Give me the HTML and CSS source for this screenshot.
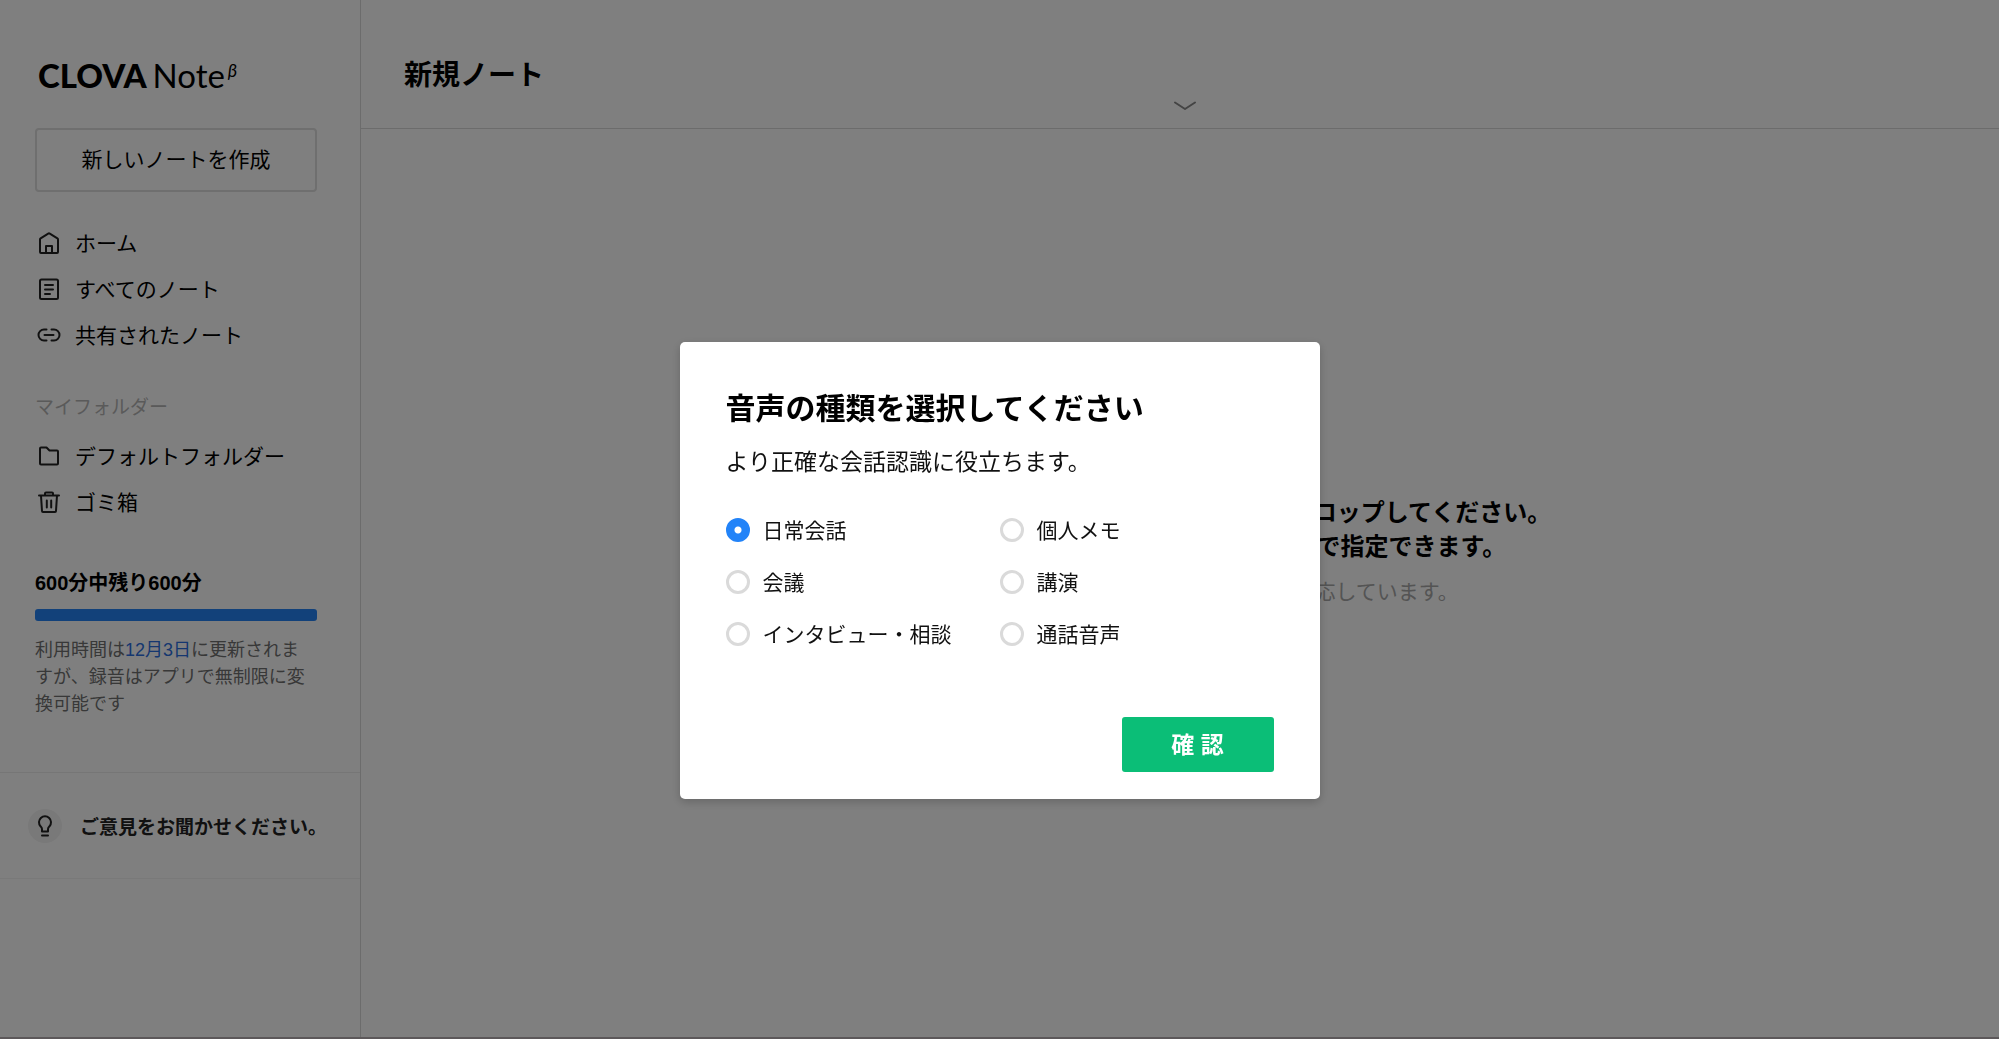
FILE: index.html
```html
<!DOCTYPE html>
<html lang="ja">
<head>
<meta charset="utf-8">
<meta name="viewport" content="width=device-width, initial-scale=1">
<title>CLOVA Note</title>
<link rel="stylesheet" href="styles.css">
</head>
<body>
<div class="app">
  <aside class="sidebar">
    <a class="logo" href="#"><span class="logo-brand">CLOVA</span><span class="logo-name">Note</span><sup class="logo-beta">β</sup></a>
    <button class="create" type="button">新しいノートを作成</button>
    <nav>
      <ul class="menu">
        <li><a class="menu-link" href="#"><svg class="icon" viewBox="0 0 24 24"><path d="M3 8.500 Q3 7.800 3.600 7.400 L11.200 2.600 Q12 2.100 12.800 2.600 L20.400 7.400 Q21 7.800 21 8.500 V21 Q21 22 20 22 H4 Q3 22 3 21 Z"/><path d="M9 22 V15 H15 V22"/></svg><span class="menu-label">ホーム</span></a></li>
        <li><a class="menu-link" href="#"><svg class="icon" viewBox="0 0 24 24"><rect x="3" y="2.5" width="18" height="19.5" rx="1.5"/><path d="M8 8 H16 M8 12.500 H16 M8 17 H13"/></svg><span class="menu-label">すべてのノート</span></a></li>
        <li><a class="menu-link" href="#"><svg class="icon" viewBox="0 0 24 24"><path d="M9.500 6.500 H7 A5.500 5.500 0 0 0 7 17.500 H9.500 M14.500 6.500 H17 A5.500 5.500 0 0 1 17 17.500 H14.500 M7.500 12 H16.500"/></svg><span class="menu-label">共有されたノート</span></a></li>
      </ul>
      <h2 class="menu-title">マイフォルダー</h2>
      <ul class="menu">
        <li><a class="menu-link" href="#"><svg class="icon" viewBox="0 0 24 24"><path d="M3 4.500 Q3 3.500 4 3.500 H9.500 L12.500 6.500 H20 Q21 6.500 21 7.500 V19.500 Q21 20.500 20 20.500 H4 Q3 20.500 3 19.500 Z"/></svg><span class="menu-label">デフォルトフォルダー</span></a></li>
        <li><a class="menu-link" href="#"><svg class="icon" viewBox="0 0 24 24"><path d="M2 5.500 H22 M8 5 V3.500 Q8 2.500 9 2.500 H15 Q16 2.500 16 3.500 V5 M4 5.500 L5 21 Q5 22 6 22 H18 Q19 22 19 21 L20 5.500 M9.800 10.500 V17.500 M14.200 10.500 V17.500"/></svg><span class="menu-label">ゴミ箱</span></a></li>
      </ul>
    </nav>
    <section class="usage">
      <h2 class="usage-title">600分中残り600分</h2>
      <div class="usage-bar"><div class="usage-fill" style="width:100%"></div></div>
      <p class="usage-note">利用時間は<span class="usage-date">12月3日</span>に更新されますが、録音はアプリで無制限に変換可能です</p>
    </section>
    <a class="feedback" href="#">
      <span class="feedback-icon"><svg class="bulb" viewBox="0 0 20 24"><path d="M7 17.500 V15 Q7 13.800 5.500 12.300 A6 6 0 1 1 14.500 12.300 Q13 13.800 13 15 V17.500 Z"/><path d="M7 21.500 H13"/></svg></span>
      ご意見をお聞かせください。
    </a>
  </aside>
  <main class="content">
    <header class="header">
      <h1 class="title">新規ノート</h1>
      <button class="expand" type="button" aria-label="詳細を開く"><svg class="chevron" viewBox="0 0 22 10"><path d="M1 1.500 L11 8 L21 1.500"/></svg></button>
    </header>
    <div class="drop">
      <p class="drop-text">音声認識したいファイルをここにドラッグ＆ドロップしてください。<br>音声の種類や参加者は ファイル選択後に次で指定できます。</p>
      <p class="drop-hint">m4a, mp3, aac, amr、wavファイル形式に対応しています。</p>
    </div>
  </main>
</div>
<div class="overlay">
  <form class="modal" role="dialog" aria-modal="true" aria-labelledby="modal-title">
    <h2 class="modal-title" id="modal-title">音声の種類を選択してください</h2>
    <p class="modal-text">より正確な会話認識に役立ちます。</p>
    <div class="options">
      <label class="option"><input class="radio" type="radio" name="voice" checked><span class="option-label">日常会話</span></label>
      <label class="option"><input class="radio" type="radio" name="voice"><span class="option-label">個人メモ</span></label>
      <label class="option"><input class="radio" type="radio" name="voice"><span class="option-label">会議</span></label>
      <label class="option"><input class="radio" type="radio" name="voice"><span class="option-label">講演</span></label>
      <label class="option"><input class="radio" type="radio" name="voice"><span class="option-label">インタビュー・相談</span></label>
      <label class="option"><input class="radio" type="radio" name="voice"><span class="option-label">通話音声</span></label>
    </div>
    <button class="confirm" type="button">確 認</button>
  </form>
</div>
</body>
</html>
```
FILE: styles.css
```css
* {
  box-sizing: border-box;
}

body {
  margin: 0;
  background: #fff;
  color: #000;
  font-family: "Liberation Sans", "Noto Sans CJK JP", sans-serif;
  font-size: 21px;
}

h1, h2, p, ul {
  margin: 0;
  padding: 0;
}

ul {
  list-style: none;
}

a {
  color: inherit;
  text-decoration: none;
}

button {
  font: inherit;
  color: inherit;
}

svg {
  display: block;
  fill: none;
  stroke: #222;
  stroke-width: 2;
  stroke-linecap: round;
  stroke-linejoin: round;
}

.app {
  display: flex;
  min-height: 100vh;
  border-bottom: 2px solid #b8b0b4;
}

/* Sidebar */
.sidebar {
  flex: 0 0 361px;
  border-right: 1px solid #d8d8d8;
}

.logo {
  display: flex;
  align-items: flex-start;
  height: 128px;
  padding: 55px 38px 0;
  font-family: Lato, sans-serif;
  font-size: 33px;
  line-height: 40px;
}

.logo-brand {
  font-weight: 900;
}

.logo-name {
  margin-left: 6px;
}

.logo-beta {
  margin-left: 3px;
  font-size: 18px;
  font-style: italic;
  line-height: 30px;
}

.create {
  display: block;
  width: 282px;
  height: 64px;
  margin: 0 35px 28px;
  padding: 0 0 4px;
  border: 2px solid #dedede;
  border-radius: 4px;
  background: transparent;
}

.menu-link {
  display: flex;
  align-items: center;
  gap: 14px;
  height: 46px;
  padding-left: 37px;
}

.menu-label,
.option-label {
  padding-bottom: 3px;
}

.icon {
  width: 24px;
  height: 24px;
}

.menu-title {
  margin: 35px 35px 10px;
  color: #b4b4b4;
  font-size: 19px;
  font-weight: 400;
  line-height: 30px;
}

.usage {
  padding: 43px 43px 54px 35px;
}

.usage-title {
  font-size: 20px;
  line-height: 30px;
}

.usage-bar {
  margin: 11px 0 16px;
}

.usage-fill {
  height: 12px;
  border-radius: 3px;
  background: #2583f5;
}

.usage-note {
  color: #707070;
  font-size: 18px;
  line-height: 27px;
}

.usage-date {
  color: #2b6ee0;
}

.feedback {
  display: flex;
  align-items: center;
  gap: 18px;
  height: 107px;
  padding-left: 28px;
  border-top: 1px solid #ececec;
  border-bottom: 1px solid #f2f2f2;
  color: #222;
  font-size: 19px;
  font-weight: 700;
}

.feedback-icon {
  display: grid;
  place-items: center;
  width: 34px;
  height: 34px;
  border-radius: 50%;
  background: #f2f2f2;
}

.bulb {
  width: 20px;
  height: 24px;
}

/* Main area */
.content {
  display: flex;
  flex: 1;
  flex-direction: column;
}

.header {
  height: 129px;
  padding: 55px 33px 0 43px;
  border-bottom: 1px solid #d8d8d8;
}

.title {
  font-size: 28px;
  line-height: 42px;
}

.expand {
  display: block;
  margin: 0 auto;
  padding: 4px 0;
  border: 0;
  background: none;
}

.chevron {
  width: 22px;
  height: 10px;
  stroke: #888;
}

.drop {
  display: flex;
  flex: 1;
  flex-direction: column;
  justify-content: center;
  gap: 13px;
  padding-bottom: 64px;
  text-align: center;
}

.drop-text {
  font-size: 24px;
  font-weight: 700;
  line-height: 34px;
}

.drop-hint {
  color: #a8a8a8;
  line-height: 30px;
}

/* Dialog */
.overlay {
  position: fixed;
  inset: 0;
  display: flex;
  align-items: center;
  justify-content: center;
  padding-top: 102px;
  background: rgba(0, 0, 0, 0.5);
}

.modal {
  display: flex;
  flex-direction: column;
  width: 640px;
  padding: 45px 46px 27px;
  border-radius: 5px;
  background: #fff;
  box-shadow: 0 3px 10px rgba(0, 0, 0, 0.2);
}

.modal-title {
  font-size: 30px;
  line-height: 44px;
}

.modal-text {
  margin: 14px 0 35px;
  color: #111;
  font-size: 23px;
  line-height: 34px;
}

.options {
  display: grid;
  grid-template-columns: 274px 1fr;
  gap: 20px 0;
}

.option {
  display: flex;
  align-items: center;
  gap: 13px;
  height: 32px;
  color: #111;
}

.radio {
  width: 24px;
  height: 24px;
  margin: 0;
  border: 3px solid #dadada;
  border-radius: 50%;
  appearance: none;
}

.radio:checked {
  border-color: #2283f8;
  background: radial-gradient(circle, #fff 3px, #2283f8 4px);
}

.confirm {
  align-self: flex-end;
  width: 152px;
  height: 55px;
  margin-top: 67px;
  padding: 0 0 4px;
  border: 0;
  border-radius: 3px;
  background: #0bbe77;
  color: #fff;
  font-size: 23px;
  font-weight: 700;
}
```
